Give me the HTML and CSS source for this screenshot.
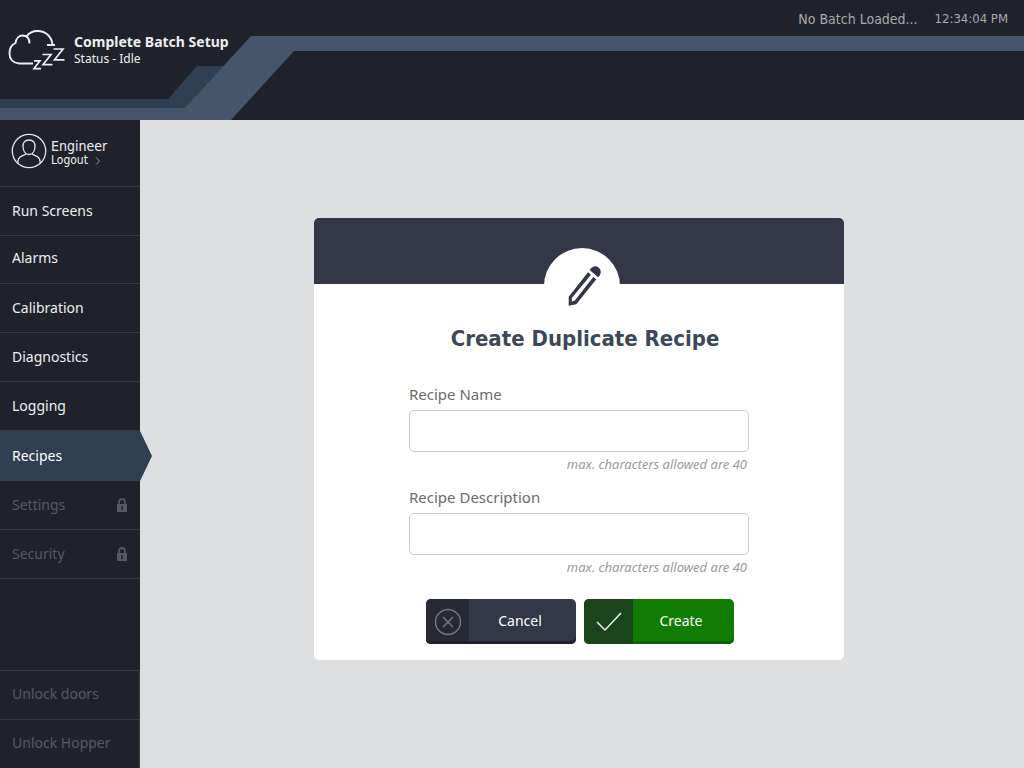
FILE: index.html
```html
<!DOCTYPE html>
<html lang="en">
<head>
<meta charset="utf-8">
<title>Create Duplicate Recipe</title>
<link rel="stylesheet" href="styles.css">
</head>
<body>
<header class="topbar">
  <svg class="ribbon" aria-hidden="true">
    <path fill="#2f3e50" d="M0 99H168L197 66H240V110H0z"/>
    <path fill="#46556b" d="M0 108H185L251 36H6000V51H294L231 120H0z"/>
  </svg>
  <div class="status">
    <svg class="cloud" width="58" height="42" viewBox="0 0 58 42" fill="none" stroke="#eeeeee" stroke-width="1.900" aria-hidden="true">
      <path d="M25 35.500H11C5 35 1.500 31 1.500 25.500C1.500 20 4 16.500 7.500 15C8 10.500 11 7.500 14.500 7.500C18.500 7.500 21.500 10 21.500 15.500M18.500 8.500C21 5 25 3 29.500 3C38 3 44 9 44.500 17M39 17H47"/>
      <path stroke-width="1.700" d="M26 32.800H32L26 40.600H33M34.500 26.500H43L35 36.600H44.500M45.500 21H55L46.500 31.800H56.500"/>
    </svg>
    <div>
      <h1 class="status-title">Complete Batch Setup</h1>
      <p class="status-text">Status - Idle</p>
    </div>
  </div>
  <div class="info"><span>No Batch Loaded...</span><time class="clock">12:34:04 PM</time></div>
</header>
<div class="layout">
  <nav class="sidebar" aria-label="Main">
    <div class="user">
      <svg width="36" height="36" viewBox="0 0 36 36" fill="none" stroke="#e4e4e4" stroke-width="1.300" aria-hidden="true">
        <circle cx="18" cy="18" r="16.700"/>
        <path d="M18 7C14 7 11.800 9.500 12 13.500C12.200 18 14.500 21.500 18 21.500S23.800 18 24 13.500C24.200 9.500 22 7 18 7zM15 20.500C14.500 22.500 9 22.500 7.500 26L6.500 30.500M21 20.500C21.500 22.500 27 22.500 28.500 26L29.500 30.500"/>
      </svg>
      <div class="user-text">
        <span class="user-name">Engineer</span>
        <a class="logout" href="#">Logout
          <svg width="6" height="8" viewBox="0 0 6 8" fill="none" stroke="#96979b" aria-hidden="true"><path d="M1 .5L4.500 4L1 7.500"/></svg></a>
      </div>
    </div>
    <a class="item" href="#">Run Screens</a>
    <a class="item short" href="#">Alarms</a>
    <a class="item" href="#">Calibration</a>
    <a class="item" href="#">Diagnostics</a>
    <a class="item" href="#">Logging</a>
    <a class="item active" href="#" aria-current="page">Recipes</a>
    <a class="item locked" href="#" aria-disabled="true">Settings
      <svg width="10" height="14" viewBox="0 0 10 14" aria-hidden="true"><path d="M2 7V4a3 3 0 0 1 6 0V7" fill="none" stroke="#59595f" stroke-width="1.800"/><path fill="#59595f" fill-rule="evenodd" d="M0 6H10V14H0zM4.300 8V12H5.700V8z"/></svg></a>
    <a class="item locked" href="#" aria-disabled="true">Security
      <svg width="10" height="14" viewBox="0 0 10 14" aria-hidden="true"><path d="M2 7V4a3 3 0 0 1 6 0V7" fill="none" stroke="#59595f" stroke-width="1.800"/><path fill="#59595f" fill-rule="evenodd" d="M0 6H10V14H0zM4.300 8V12H5.700V8z"/></svg></a>
    <div class="unlock">
      <button class="item unlock-item" type="button">Unlock doors</button>
      <button class="item unlock-item" type="button">Unlock Hopper</button>
    </div>
  </nav>
  <main class="content">
    <section class="card" aria-labelledby="card-title">
      <div class="card-top">
        <div class="badge">
          <svg width="38" height="42" viewBox="-1 0 38 42" aria-hidden="true">
            <path fill="#333746" fill-rule="evenodd" d="M24 7.300L4.700 31.700V40.700L12.300 39.300L32.300 14.300L29.300 12L10.800 35.500L7.800 36.500V33L27 9.700z"/>
            <path fill="#333746" d="M25.700 5C27.500 2 29.500 1 31.500 1.200C35 1.700 37 4.500 36.700 7.500C36.500 9.500 35.500 11 34 12.300z"/>
          </svg>
        </div>
      </div>
      <form class="form">
        <h2 class="title" id="card-title">Create Duplicate Recipe</h2>
        <div class="field">
          <label for="name">Recipe Name</label>
          <input id="name" type="text" maxlength="40" aria-describedby="name-hint">
          <small id="name-hint">max. characters allowed are 40</small>
        </div>
        <div class="field">
          <label for="desc">Recipe Description</label>
          <input id="desc" type="text" maxlength="40" aria-describedby="desc-hint">
          <small id="desc-hint">max. characters allowed are 40</small>
        </div>
        <div class="actions">
          <button class="btn cancel" type="button">
            <span class="btn-icon"><svg width="28" height="28" viewBox="0 0 28 28" fill="none" stroke="#777982" stroke-width="1.400" aria-hidden="true"><circle cx="14" cy="14" r="12.500"/><path d="M9 9L19 19M19 9L9 19"/></svg></span>
            <span class="btn-label">Cancel</span>
          </button>
          <button class="btn create" type="submit">
            <span class="btn-icon"><svg width="26" height="20" viewBox="0 0 26 20" fill="none" stroke="#eeeeee" stroke-width="1.500" aria-hidden="true"><path d="M1 10L9 18L25 1"/></svg></span>
            <span class="btn-label">Create</span>
          </button>
        </div>
      </form>
    </section>
  </main>
</div>
</body>
</html>
```
FILE: styles.css
```css
* { box-sizing: border-box; }
body {
  margin: 0;
  min-height: 100vh;
  display: flex;
  flex-direction: column;
  background: #dedfe1;
  font-family: Tahoma, "Noto Sans", sans-serif;
  font-size: 14px;
}
a { color: inherit; text-decoration: none; }
.topbar {
  position: relative;
  display: flex;
  justify-content: space-between;
  align-items: flex-start;
  height: 120px;
  background: #20222b;
  color: #eeeeee;
  overflow: hidden;
}
.ribbon { position: absolute; inset: 0; width: 100%; height: 100%; }
.status { position: relative; display: flex; gap: 8px; padding: 28px 0 0 8px; }
.status-title { margin: 6px 0 0; font-size: 14px; line-height: 16px; }
.status-text { margin: 0; font-size: 12px; line-height: 17px; }
.info {
  position: relative;
  display: flex;
  gap: 17px;
  padding: 10px 16px 0 0;
  color: #a9a9ab;
  font-family: Tahoma, "DejaVu Sans Condensed", sans-serif;
  font-size: 14px;
  line-height: 18px;
}
.clock { font-size: 13px; }
.layout { flex: 1; display: flex; }
.sidebar { width: 140px; flex: none; display: flex; flex-direction: column; background: #20222b; color: #eeeeee; }
.user { display: flex; gap: 4px; height: 67px; padding: 13px 0 0 11px; border-bottom: 1px solid #363841; }
.user-text { display: flex; flex-direction: column; padding-top: 5px; font-family: Tahoma, "DejaVu Sans Condensed", sans-serif; }
.user-name { font-size: 14px; line-height: 16px; }
.logout { display: flex; align-items: center; gap: 7px; font-size: 12px; line-height: 13px; }
.item {
  display: flex;
  align-items: center;
  justify-content: space-between;
  width: 100%;
  height: 49px;
  padding: 0 13px 1px 12px;
  border: 0;
  border-bottom: 1px solid #363841;
  background: none;
  color: inherit;
  font-family: inherit;
  font-size: 14px;
  text-align: left;
}
.short { height: 48px; padding-bottom: 4px; }
.active { position: relative; height: 50px; background: #2f3e50; border-bottom-color: #2f3e50; color: #ffffff; }
.active::after {
  content: "";
  position: absolute;
  left: 100%;
  top: 0;
  width: 12px;
  height: 50px;
  background: #2f3e50;
  clip-path: polygon(0 0, 100% 50%, 0 100%);
}
.locked { color: #59595f; }
.unlock { margin-top: auto; border-right: 1px solid #363841; }
.unlock-item { border-top: 1px solid #363841; border-bottom: 0; padding-bottom: 3px; color: #59595f; }
.content { flex: 1; display: flex; align-items: center; justify-content: center; padding: 0 6px 10px 0; }
.card { width: 530px; border-radius: 5px; background: #ffffff; }
.card-top { position: relative; height: 66px; border-radius: 5px 5px 0 0; background: #333746; }
.badge {
  position: absolute;
  left: 50%;
  top: 30px;
  width: 76px;
  height: 76px;
  margin-left: -35px;
  border-radius: 50%;
  display: flex;
  align-items: center;
  justify-content: center;
  background: #ffffff;
}
.form { display: flex; flex-direction: column; align-items: center; padding: 40px 0 16px; }
.title {
  margin: 0 0 32px;
  padding-left: 12px;
  color: #3c4858;
  font-family: Tahoma, "DejaVu Sans Condensed", sans-serif;
  font-size: 22px;
  line-height: 30px;
}
.field { display: flex; flex-direction: column; width: 340px; margin-bottom: 17px; }
.field label { color: #6b6b6b; font-size: 15px; line-height: 16px; margin-bottom: 8px; }
.field input { height: 42px; border: 1px solid #cccccc; border-radius: 5px; padding: 0 10px; font: inherit; }
.field small { padding: 4px 2px 0 0; color: #9a9a9e; font-size: 13px; font-style: italic; line-height: 16px; text-align: right; }
.actions { display: flex; gap: 8px; padding: 7px 0 0 2px; }
.btn { display: flex; align-items: center; width: 150px; height: 45px; padding: 0; border: 0; border-radius: 5px; overflow: hidden; color: #ffffff; font-family: inherit; font-size: 14px; }
.btn-icon { display: flex; align-items: center; justify-content: center; height: 100%; }
.btn-label { flex: 1; padding: 0 5px 2px 0; }
.cancel { background: #333746; box-shadow: inset 0 -3px #20222b; }
.cancel .btn-icon { width: 43px; background: #272935; box-shadow: inset 0 -3px #20222b; }
.create { background: #117c04; box-shadow: inset 0 -3px #0d6404; }
.create .btn-icon { width: 49px; background: #1c441b; }
```
